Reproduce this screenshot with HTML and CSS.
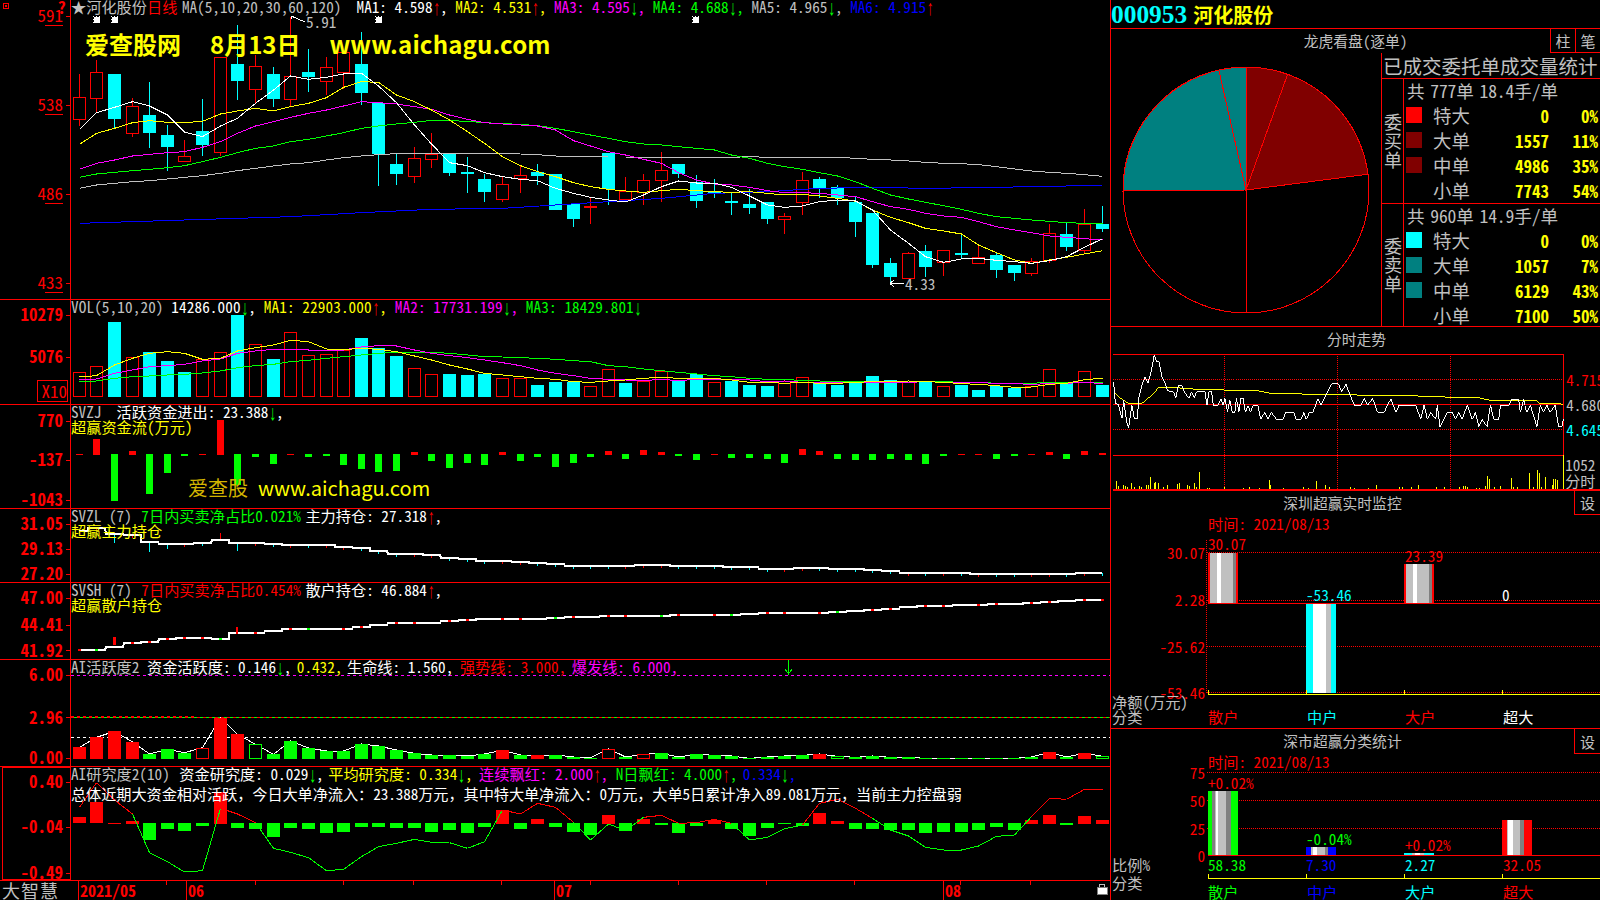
FILE: index.html
```html
<!DOCTYPE html>
<html lang="zh">
<head>
<meta charset="utf-8">
<title>河化股份 日线</title>
<link rel="stylesheet" href="styles.css">
</head>
<body>
<div class="app">
  <div class="left">
    <section class="panel h-main">
      <svg class="axis" viewBox="0 0 70 299">
        <rect class="ln" x="3.5" y="3.5" width="5" height="5"/><rect class="fr" x="5" y="5" width="2" height="2"/>
        <text class="ax" x="63" y="16">591</text><text class="ax b" x="66" y="8">?</text>
        <path class="ln" d="M45 25.5H63M66 16.5H70"/>
        <text class="ax" x="63" y="105">538</text><path class="ln" d="M45 114.5H63M66 105.5H70"/>
        <text class="ax" x="63" y="194">486</text><path class="ln" d="M45 203.5H63M66 194.5H70"/>
        <text class="ax" x="63" y="283">433</text><path class="ln" d="M45 292.5H63M66 283.5H70"/>
      </svg>
      <div class="plot">
        <svg id="main" class="chart" viewBox="71 0 1039 299"></svg>
        <div class="legend">
          <div class="row"><span class="s">★河化股份</span><span class="r">日线</span> <span class="s n3">MA(5,10,20,30,60,120)</span>  <span class="w">MA1: 4.598<i class="ar r">↑</i>,</span> <span class="y">MA2: 4.531<i class="ar r">↑</i>,</span> <span class="m">MA3: 4.595<i class="ar g">↓</i>,</span> <span class="g">MA4: 4.688<i class="ar g">↓</i>,</span> <span class="s">MA5: 4.965<i class="ar g">↓</i>,</span> <span class="bl">MA6: 4.915<i class="ar r">↑</i></span></div>
        </div>
        <div class="wm"><span>爱查股网</span><span>8月13日</span><span>www.aichagu.com</span></div>
      </div>
    </section>

    <section class="panel h-vol">
      <svg class="axis" viewBox="0 300 70 104">
        <text class="ax b" x="63" y="315">10279</text><text class="ax b" x="63" y="357">5076</text>
        <path class="ln" d="M66 315.5H70M66 357.5H70"/>
        <rect class="ln" x="37.5" y="380.5" width="30" height="21"/>
        <text class="ax" x="67" y="392">X10</text>
      </svg>
      <div class="plot">
        <svg id="vol" class="chart" viewBox="71 300 1039 104"></svg>
        <div class="legend ls">
          <div class="row"><span class="s">VOL(5,10,20)</span> <span class="w">14286.000<i class="ar g">↓</i>,</span> <span class="y">MA1: 22903.000<i class="ar r">↑</i>,</span> <span class="m">MA2: 17731.199<i class="ar g">↓</i>,</span> <span class="g">MA3: 18429.801<i class="ar g">↓</i></span></div>
        </div>
      </div>
    </section>

    <section class="panel h-zj">
      <svg class="axis" viewBox="0 405 70 103">
        <text class="ax b" x="63" y="421">770</text><text class="ax b" x="63" y="460">-137</text><text class="ax b" x="63" y="500">-1043</text>
        <path class="ln" d="M66 421.5H70M66 460.5H70M66 500.5H70"/>
      </svg>
      <div class="plot">
        <svg id="zj" class="chart" viewBox="71 405 1039 103"></svg>
        <div class="legend">
          <div class="row"><span class="s">SVZJ</span>  <span class="w">活跃资金进出: 23.388<i class="ar g">↓</i>,</span></div>
          <div class="row y">超赢资金流(万元)</div>
        </div>
        <div class="wm2"><span>爱查股</span><span>www.aichagu.com</span></div>
      </div>
    </section>

    <section class="panel h-zl">
      <svg class="axis" viewBox="0 509 70 73">
        <text class="ax b" x="63" y="524">31.05</text><text class="ax b" x="63" y="549">29.13</text><text class="ax b" x="63" y="574">27.20</text>
        <path class="ln" d="M66 524.5H70M66 549.5H70M66 574.5H70"/>
      </svg>
      <div class="plot">
        <svg id="zl" class="chart" viewBox="71 509 1039 73"></svg>
        <div class="legend">
          <div class="row"><span class="s">SVZL (7)</span> <span class="g p2">7日内买卖净占比0.021%</span> <span class="w n3">主力持仓: 27.318<i class="ar r">↑</i>,</span></div>
          <div class="row y">超赢主力持仓</div>
        </div>
      </div>
    </section>

    <section class="panel h-sh">
      <svg class="axis" viewBox="0 583 70 76">
        <text class="ax b" x="63" y="598">47.00</text><text class="ax b" x="63" y="625">44.41</text><text class="ax b" x="63" y="651">41.92</text>
        <path class="ln" d="M66 598.5H70M66 625.5H70M66 650.5H70"/>
      </svg>
      <div class="plot">
        <svg id="sh" class="chart" viewBox="71 583 1039 76"></svg>
        <div class="legend">
          <div class="row"><span class="s">SVSH (7)</span> <span class="r p2">7日内买卖净占比0.454%</span> <span class="w n3">散户持仓: 46.884<i class="ar r">↑</i>,</span></div>
          <div class="row y">超赢散户持仓</div>
        </div>
      </div>
    </section>

    <section class="panel h-hy">
      <svg class="axis" viewBox="0 660 70 106">
        <text class="ax b" x="63" y="675">6.00</text><text class="ax b" x="63" y="718">2.96</text><text class="ax b" x="63" y="758">0.00</text>
        <path class="ln" d="M66 675.5H70M66 717.5H70M66 758.5H70"/>
      </svg>
      <div class="plot">
        <svg id="hy" class="chart" viewBox="71 660 1039 106"></svg>
        <div class="legend">
          <div class="row"><span class="s">AI活跃度2</span> <span class="w">资金活跃度: 0.146<i class="ar g">↓</i>,</span> <span class="y n2">0.432,</span> <span class="w n3">生命线: 1.560,</span> <span class="r n1">强势线: 3.000,</span> <span class="m n2">爆发线: 6.000,</span></div>
        </div>
      </div>
    </section>

    <section class="panel h-yj">
      <svg class="axis" viewBox="0 767 70 113">
        <rect class="ln" x="2.5" y="767.5" width="68" height="112"/>
        <text class="ax b" x="63" y="782">0.40</text><text class="ax b" x="63" y="827">-0.04</text><text class="ax b" x="63" y="873">-0.49</text>
        <path class="ln" d="M66 782.5H70M66 827.5H70M66 873.5H70"/>
      </svg>
      <div class="plot">
        <svg id="yj" class="chart" viewBox="71 767 1039 113"></svg>
        <div class="legend wide">
          <div class="row"><span class="s">AI研究度2(10)</span> <span class="w p2">资金研究度: 0.029<i class="ar g">↓</i>,</span> <span class="y n3">平均研究度: 0.334<i class="ar g">↓</i>,</span> <span class="m n1">连续飘红: 2.000<i class="ar r">↑</i>,</span> <span class="g">N日飘红: 4.000<i class="ar r">↑</i>,</span> <span class="bl n2">0.334<i class="ar g">↓</i>,</span></div>
          <div class="row w tight">总体近期大资金相对活跃，今日大单净流入：23.388万元，其中特大单净流入：0万元，大单5日累计净入89.081万元，当前主力控盘弱</div>
        </div>
      </div>
    </section>

    <svg class="datebar" viewBox="0 881 1110 19">
      <text class="brand" x="2" y="890">大智慧</text>
      <path class="ln" d="M78.5 881V900M186.5 881V900M554.5 881V900M943.5 881V900M166.5 881V885M255.5 881V885M343.5 881V885M413.5 881V885M501.5 881V885M590.5 881V885M678.5 881V885M766.5 881V885M854.5 881V885M960.5 881V885M1030.5 881V885"/>
      <text class="dt" x="80" y="891">2021/05</text><text class="dt" x="188" y="891">06</text><text class="dt" x="556" y="891">07</text><text class="dt" x="945" y="891">08</text>
      <path class="lock" d="M1099.5 887V884.5H1104.5V887"/><rect class="lockb" x="1097" y="887" width="10" height="7"/>
    </svg>
  </div>

  <aside class="side">
    <header class="quote"><span class="code">000953</span><span class="nm">河化股份</span></header>

    <section class="pane p1">
      <div class="titlebar tb1"><div class="ttl">龙虎看盘(逐单)</div><button class="btn">柱</button><button class="btn">笔</button></div>
      <div class="pie-body">
        <svg class="pie" viewBox="1111 53 270 273">
          <path class="dr" d="M1246 190L1246 67A123 123 0 0 1 1287.6 74.3Z"/>
          <path class="dr" d="M1246 190L1287.6 74.3A123 123 0 0 1 1368 174.2Z"/>
          <path class="tl" d="M1246 190L1123 191A123 123 0 0 1 1218.8 70Z"/>
          <path class="tl" d="M1246 190L1218.8 70A123 123 0 0 1 1246 67Z"/>
          <circle class="ln" cx="1246" cy="190" r="123"/>
          <path class="ln" d="M1246 190V313"/>
        </svg>
        <div class="stats">
          <div class="stats-h">已成交委托单成交量统计</div>
          <div class="group gb">
            <div class="vl">委买单</div>
            <div class="rows">
              <div class="total">共 777单 18.4手/单</div>
              <div class="srow"><i class="sw sr"></i><span>特大</span><b>0</b><b>0%</b></div>
              <div class="srow"><i class="sw sd"></i><span>大单</span><b>1557</b><b>11%</b></div>
              <div class="srow"><i class="sw sd"></i><span>中单</span><b>4986</b><b>35%</b></div>
              <div class="srow"><i class="sw"></i><span>小单</span><b>7743</b><b>54%</b></div>
            </div>
          </div>
          <div class="group">
            <div class="vl">委卖单</div>
            <div class="rows">
              <div class="total">共 960单 14.9手/单</div>
              <div class="srow"><i class="sw sc"></i><span>特大</span><b>0</b><b>0%</b></div>
              <div class="srow"><i class="sw st"></i><span>大单</span><b>1057</b><b>7%</b></div>
              <div class="srow"><i class="sw st"></i><span>中单</span><b>6129</b><b>43%</b></div>
              <div class="srow"><i class="sw"></i><span>小单</span><b>7100</b><b>50%</b></div>
            </div>
          </div>
        </div>
      </div>
    </section>

    <section class="pane p2">
      <div class="titlebar tb2"><div class="ttl">分时走势</div></div>
      <svg id="fs" class="chart" viewBox="1111 354 489 135"></svg>
    </section>

    <section class="pane p3">
      <div class="titlebar tb3"><div class="ttl">深圳超赢实时监控</div><button class="btn">设</button></div>
      <svg id="sz" class="chart" viewBox="1111 515 489 213"></svg>
    </section>

    <section class="pane p4">
      <div class="titlebar tb4"><div class="ttl">深市超赢分类统计</div><button class="btn">设</button></div>
      <svg id="ss" class="chart" viewBox="1111 754 489 146"></svg>
    </section>
  </aside>
</div>
<script src="charts.js"></script>
</body>
</html>
```
FILE: styles.css
```css
* { box-sizing: border-box; }
html, body { margin: 0; padding: 0; background: #000; }
body { font-family: "Noto Sans Mono CJK SC", "Liberation Mono", "Noto Sans CJK SC", monospace; font-size: 15px; color: #c0c0c0; overflow: hidden; }
svg { display: block; shape-rendering: crispEdges; }
i { font-style: normal; }
.app { display: flex; width: 1600px; height: 900px; overflow: hidden; }
.left { width: 1110px; display: flex; flex-direction: column; }
.panel { display: flex; border-bottom: 1px solid #f00; }
.h-main { height: 300px; }
.h-vol { height: 105px; }
.h-zj { height: 104px; }
.h-zl { height: 74px; }
.h-sh { height: 77px; }
.h-hy { height: 107px; }
.h-yj { height: 114px; }
.axis { width: 70px; flex: none; height: 100%; }
.plot { position: relative; flex: 1; border-left: 1px solid #f00; }
.chart { width: 100%; height: 100%; }
.legend { position: absolute; left: 0; top: -1px; font-size: 15.2px; line-height: 14.5px; }
.ls { letter-spacing: 0.12px; }
.wide .row + .row { margin-top: 5.5px; }
.tight { letter-spacing: -0.08px; }
.row { height: 14.5px; white-space: pre; }
.n1 { margin-left: -1px; }
.n2 { margin-left: -2px; }
.n3 { margin-left: -3px; }
.p2 { margin-left: 2px; }
.ar { display: inline-block; width: 7.6px; font-family: "Liberation Mono", monospace; font-size: 14px; line-height: 10px; text-align: center; transform: scaleY(1.55); }
.s { color: #c0c0c0; fill: #c0c0c0; }
.w { color: #fff; fill: #fff; }
.y { color: #ff0; fill: #ff0; }
.m { color: #f0f; fill: #f0f; }
.g { color: #0f0; fill: #0f0; }
.r { color: #f00; fill: #f00; }
.c { color: #0ff; fill: #0ff; }
.bl { color: #00f; fill: #00f; }
.wm { position: absolute; left: 14px; top: 28px; display: flex; gap: 29px; color: #ff0; font: bold 24px/32px "Noto Sans CJK SC", sans-serif; }
.wm span:last-child { letter-spacing: 0.15px; }
.wm2 { position: absolute; left: 117px; top: 68px; display: flex; gap: 10px; color: #ff0; font: 20px/30px "Noto Sans CJK SC", sans-serif; }
.wm2 span:first-child { color: #d2b400; }
.ln { fill: none; stroke: #f00; stroke-width: 1; }
.fr { fill: #f00; }
.ax { font: 17px "Noto Sans Mono CJK SC", "Liberation Mono", monospace; fill: #f00; text-anchor: end; dominant-baseline: central; transform: translateY(-1.5px); }
.ax.b { font-weight: bold; }
.datebar { width: 1110px; height: 19px; }
.brand { font: 18px "Noto Sans CJK SC", sans-serif; letter-spacing: 1px; fill: #c0c0c0; dominant-baseline: central; }
.dt { font: bold 16px "Noto Sans Mono CJK SC", "Liberation Mono", monospace; fill: #f00; dominant-baseline: central; transform: translateY(-1px); }
.lock { fill: none; stroke: #c0c0c0; }
.lockb { fill: #fff; stroke: #808080; }
.side { width: 490px; border-left: 1px solid #f00; display: flex; flex-direction: column; }
.quote { height: 29px; border-bottom: 1px solid #f00; display: flex; align-items: center; gap: 6px; }
.code { color: #0ff; font: bold 25.4px "Liberation Serif", serif; }
.nm { color: #ff0; font: bold 20px "Noto Sans CJK SC", sans-serif; }
.pane { display: flex; flex-direction: column; border-bottom: 1px solid #f00; }
.p1 { height: 298px; }
.p2 { height: 164px; border-bottom-width: 2px; }
.p3 { height: 238px; }
.p4 { height: 171px; border-bottom: 0; }
.titlebar { height: 24px; flex: none; display: flex; }
.tb1 .ttl { padding-left: 50px; }
.tb2 { height: 27px; }
.tb4 { height: 25px; }
.ttl { flex: 1; text-align: center; line-height: 23px; font-size: 14.8px; }
.tb2 .ttl { line-height: 24px; }
.btn { width: 25px; flex: none; background: #000; border: 0; border-left: 1px solid #f00; border-bottom: 1px solid #f00; color: #c0c0c0; padding: 0; font: 15px "Noto Sans CJK SC", sans-serif; }
.tb3 .btn, .tb4 .btn { width: 26px; }
.pie-body { flex: 1; min-height: 0; display: flex; }
.pie { width: 270px; height: 273px; flex: none; }
.stats { flex: 1; min-width: 0; border-left: 1px solid #f00; display: flex; flex-direction: column; }
.stats-h { height: 27px; border-bottom: 1px solid #f00; white-space: nowrap; padding-left: 1px; font: 19.5px/25px "Noto Sans CJK SC", sans-serif; }
.group { display: flex; flex: none; }
.gb { height: 125px; border-bottom: 1px solid #f00; }
.vl { width: 22px; flex: none; border-right: 1px solid #f00; writing-mode: vertical-rl; text-align: center; font: 18px/21px "Noto Sans CJK SC", sans-serif; letter-spacing: 1px; }
.rows { flex: 1; min-width: 0; padding-top: 1px; }
.total { height: 22px; padding-left: 3px; font-size: 17.6px; line-height: 22px; white-space: pre; word-spacing: -3px; letter-spacing: -0.1px; }
.srow { height: 25px; display: grid; grid-template-columns: 16px 1fr 50px 49px; align-items: center; padding: 0 2px; }
.srow span { padding-left: 11px; font: 18.4px "Noto Sans CJK SC", sans-serif; }
.srow b { text-align: right; color: #ff0; font: bold 17px "Noto Sans Mono CJK SC", "Liberation Mono", monospace; }
.sw { width: 16px; height: 16px; display: block; }
.sr { background: #f00; }
.sd { background: #800000; }
.sc { background: #0ff; }
.st { background: #008080; }
.dr { fill: #800000; stroke: #f00; }
.tl { fill: #008080; stroke: #f00; }
.t { font-size: 15.2px; dominant-baseline: central; transform: translateY(-1px); }
.te { text-anchor: end; }
```
FILE: charts.js
```js
const X = i => Math.round(78.6 + i * 17.64);
const rect = (x, y, w, h, f) => `<rect x="${x}" y="${y}" width="${w}" height="${h}" fill="${f}"/>`;
const box = (x, y, w, h, s) => `<rect x="${x + 0.5}" y="${y + 0.5}" width="${w - 1}" height="${h - 1}" fill="#000" stroke="${s}"/>`;
const line = (x1, y1, x2, y2, s, d, o) => `<line x1="${x1}" y1="${y1}" x2="${x2}" y2="${y2}" stroke="${s}"${d ? ` stroke-dasharray="${d}"` : ''}${o ? ` stroke-dashoffset="${o}"` : ''}/>`;
const poly = (pts, s, w) => `<polyline points="${pts.map(p => p.join(',')).join(' ')}" fill="none" stroke="${s}" stroke-width="${w || 1}"/>`;
const txt = (x, y, t, c, end) => `<text class="t ${c}${end ? ' te' : ''}" x="${x}" y="${y}">${t}</text>`;
const series = (a, off) => a.map((v, i) => [X(i) + 0.5, off + v / 3]);
const set = (id, html) => { document.getElementById(id).innerHTML = html; };
const RED = '#f00', CY = '#0ff', GR = '#0f0', WH = '#fff', YE = '#ff0', MA = '#f0f', SI = '#c0c0c0', BL = '#00f';

/* type, body top, body bottom, high, low (zoomed pixels) */
const K = [
['r',290,355,222,378],['r',217,295,180,335],['c',222,356,222,385],['r',319,400,295,410],['c',346,401,247,443],
['c',406,443,376,512],['r',467,482,420,482],['c',394,437,297,467],['r',172,457,172,468],['c',193,245,76,300],
['r',199,268,166,310],['c',223,299,202,320],['r',229,298,50,318],['c',217,231,148,276],['r',202,244,172,286],
['r',157,218,157,268],['c',193,281,97,315],['c',310,462,310,557],['c',493,524,462,555],['r',473,526,442,548],
['r',461,475,400,503],['c',462,518,462,527],['c',517,524,472,578],['c',538,578,522,605],['r',553,598,528,605],
['r',524,534,495,578],['c',516,527,492,555],['c',522,630,522,630],['c',612,656,612,680],['f',618,622,592,672],
['c',459,568,459,614],['r',574,599,532,600],['r',541,577,522,614],['r',511,542,457,605],['c',493,524,493,534],
['c',547,605,526,623],['c',573,581,538,594],['c',603,608,580,644],['c',612,623,568,641],['c',606,656,606,671],
['r',649,659,640,701],['r',541,608,517,644],['c',538,564,532,594],['c',562,594,556,614],['c',606,665,592,710],
['c',640,797,640,803],['c',790,833,775,852],['r',760,836,755,836],['c',754,803,736,832],['r',751,788,751,827],
['c',760,767,704,776],['r',770,788,738,788],['c',766,812,756,833],['c',796,821,796,842],['r',782,818,775,827],
['r',700,782,672,788],['c',702,740,668,752],['r',673,752,628,758],['c',672,686,618,695]];

const MA1 = [388,338,322,305,318,345,396,410,378,355,310,270,228,238,232,222,220,258,308,375,432,488,497,518,530,538,542,565,580,592,600,606,585,560,543,549,549,562,588,615,622,618,605,600,603,630,690,730,770,787,777,775,781,785,790,782,770,742,716];
const MA2 = [433,400,385,368,362,367,368,364,342,333,325,333,320,310,293,262,245,247,285,305,330,360,395,430,470,497,515,530,548,560,568,573,577,572,568,572,575,577,575,580,585,583,588,595,604,630,652,668,685,693,702,735,758,780,790,780,772,762,752];
const MA3 = [508,490,480,468,463,458,455,442,425,400,378,365,352,340,330,318,305,308,312,320,328,345,358,368,372,375,378,390,422,438,455,465,478,490,518,540,552,555,562,572,578,578,580,585,590,605,620,628,640,648,652,665,680,690,698,708,712,716,720];
const MA4 = [532,522,517,512,508,503,497,485,472,458,445,438,425,418,408,398,385,378,372,367,361,362,364,368,371,373,377,385,395,405,415,425,432,435,440,445,450,465,475,490,500,508,518,528,545,565,585,597,607,617,628,640,650,655,660,664,668,670,670];
const MA5 = [565,555,550,545,542,537,532,527,520,512,505,498,492,488,480,473,468,464,461,461,461,461,461,461,461,462,464,468,469,470,471,471,471,471,471,472,472,472,470,472,472,472,472,472,475,478,480,483,487,490,491,494,500,507,513,517,520,524,529];
const MA6 = [[0,670],[6,660],[12,650],[16,638],[20,628],[24,625],[27,615],[30,605],[33,595],[36,580],[39,575],[42,565],[45,562],[48,565],[51,563],[54,560],[56,558],[58,557]];

const star = (x, y) => `<g stroke="#fff">${line(x - 3, y, x + 4, y, WH)}${line(x + .5, y - 3, x + .5, y + 4, WH)}${rect(x - 2, y - 2, 5, 5, WH)}${line(x - 3, y - 3, x + 4, y + 4, WH)}${line(x + 4, y - 3, x - 3, y + 4, WH)}</g>`;
let h = '';
K.forEach((k, i) => {
  const x = X(i), t = k[1] / 3, b = k[2] / 3, hi = k[3] / 3, lo = k[4] / 3;
  const c = k[0] === 'c' ? CY : RED;
  h += line(x + .5, hi, x + .5, lo, c);
  if (k[0] === 'r') h += box(x - 6, Math.round(t), 13, Math.max(3, Math.round(b - t) + 1), RED);
  else h += rect(x - 6, Math.round(t), 13, Math.max(2, Math.round(b - t)), c);
});
h += poly(MA6.map(p => [X(p[0]) + .5, p[1] / 3]), BL, 1);
h += poly(series(MA5, 0), SI);
h += poly(series(MA4, 0), GR);
h += poly(series(MA3, 0), MA);
h += poly(series(MA2, 0), YE);
h += poly(series(MA1, 0), WH);
h += star(96, 19) + star(114, 19) + star(378, 19) + star(695, 19);
h += poly([[291, 16], [305, 22]], WH) + poly([[291, 16], [294, 16]], WH) + poly([[291, 16], [292, 19]], WH);
h += txt(306, 22, '5.91', 's');
h += poly([[890, 283.5], [904, 283.5]], WH) + poly([[890, 283.5], [894, 280]], WH) + poly([[890, 283.5], [894, 287]], WH);
h += txt(905, 284, '4.33', 's');
set('main', h);

/* volume */
const VT = [['r',230],['r',214],['c',82],['r',185],['c',172],['c',198],['c',232],['r',192],['r',170],['c',60],['r',148],['c',192],['r',112],['r',181],['r',178],['r',165],['c',130],['c',160],['c',183],['r',220],['r',238],['c',237],['c',240],['c',236],['r',250],['r',250],['c',270],['c',262],['c',260],['r',274],['r',223],['c',264],['r',258],['r',228],['c',258],['c',238],['r',262],['c',258],['c',270],['c',273],['r',258],['r',247],['c',265],['c',270],['c',264],['c',243],['c',256],['r',262],['c',258],['r',274],['c',270],['c',285],['c',272],['c',278],['r',272],['r',223],['c',265],['r',229],['c',270]];
const VM1 = [246,242,210,190,175,170,175,193,190,168,158,150,136,140,162,164,160,163,170,183,195,210,222,235,240,245,250,253,260,262,258,255,250,247,250,250,250,255,262,262,265,262,265,265,262,260,260,258,260,262,266,268,272,277,276,268,265,254,250];
const VM2 = [254,252,235,225,215,212,208,198,192,175,168,163,163,165,165,165,156,152,153,165,175,182,188,195,203,212,225,235,242,250,253,255,256,254,256,254,253,254,255,260,258,262,263,262,262,262,262,262,260,262,263,263,265,266,268,266,265,262,266];
const VM3 = [261,258,250,245,243,240,238,234,228,218,212,208,200,196,190,185,180,175,172,172,172,175,180,185,186,188,190,193,197,200,212,215,222,227,232,237,242,245,250,253,254,256,258,259,260,259,258,258,258,260,262,262,265,265,265,262,262,262,262];
h = '';
VT.forEach((v, i) => {
  const x = X(i), t = Math.round(295 + v[1] / 3), hh = 397 - t;
  h += v[0] === 'c' ? rect(x - 6, t, 13, hh, CY) : box(x - 6, t, 13, hh, RED);
});
h += poly(series(VM3, 295), GR) + poly(series(VM2, 295), MA) + poly(series(VM1, 295), YE);
set('vol', h);

/* bars around a baseline: colour, top, bottom */
const ZJ = [['r',477,479],['r',432,480],['g',478,618],['r',468,480],['g',478,597],['g',478,534],['g',478,483],['r',477,479],['r',376,480],['g',478,570],['g',478,487],['g',478,507],['r',477,479],['g',478,486],['g',478,484],['g',478,510],['g',478,522],['g',478,531],['g',478,528],['r',472,480],['g',478,498],['g',478,519],['g',478,504],['g',478,510],['r',472,480],['g',478,498],['g',478,486],['g',478,516],['g',478,504],['g',478,486],['r',468,480],['g',478,492],['r',466,480],['r',471,480],['g',478,483],['g',478,495],['r',477,479],['g',478,489],['g',478,489],['g',478,492],['g',478,504],['r',462,480],['r',468,480],['g',478,492],['g',478,495],['g',478,495],['g',478,492],['g',478,495],['g',478,507],['g',478,483],['r',477,479],['r',477,479],['g',478,492],['g',478,483],['r',477,479],['r',471,480],['g',478,492],['r',468,480],['r',474,480]];
h = '';
ZJ.forEach((b, i) => {
  const y = Math.round(295 + b[1] / 3), e = Math.max(y + 1, Math.round(295 + b[2] / 3));
  h += rect(X(i) - 3, y, 7, e - y, b[0] === 'r' ? RED : GR);
});
set('zj', h);

/* holdings */
const stepLine = (a, off) => {
  const p = [];
  a.forEach((v, i) => {
    const y = Math.round(off + v / 3);
    p.push([i ? X(i) - 8 : X(0), y], [i === a.length - 1 ? X(i) : X(i) + 9, y]);
  });
  return poly(p, WH, 2);
};
const ZL = [708,700,718,720,740,746,746,745,735,743,744,748,749,749,750,755,760,768,776,778,779,790,793,797,797,800,803,807,813,813,813,813,809,809,812,812,812,815,815,821,821,818,818,821,821,824,828,833,833,833,833,836,836,836,836,836,836,833,833];
h = '';
ZL.forEach((v, i) => {
  const y = Math.round(295 + v / 3), x = X(i) + .5, red = K[i][0] === 'r';
  const big = { 2: 14, 4: 16, 5: 6, 9: 12 };
  if (i === 8) h += line(x, y - 7, x, y, RED);
  else h += line(x, y, x, y + (big[i] ? big[i] / 2 + 2 : 3), red ? RED : CY);
});
h += stepLine(ZL, 295);
set('zl', h);

const SH = [180,180,170,160,155,147,145,145,148,128,128,122,118,117,117,117,112,106,98,98,98,94,91,88,88,88,88,85,82,80,78,78,78,78,76,74,74,74,72,69,68,68,68,66,63,59,57,51,48,48,46,44,42,41,39,36,33,30,30];
h = stepLine(SH, 590);
SH.forEach((v, i) => {
  const y = Math.round(590 + v / 3), x = X(i);
  const green = [1, 8, 13, 26, 27, 32, 33, 37, 43].includes(i);
  if (i === 2) h += rect(x - 1, 637, 3, 8, RED);
  else if (i === 9) h += rect(x - 1, 627, 2, 7, RED);
  else if (i % 3 !== 2 || i < 10) h += rect(x - 1, y - 1, 3, 2, green ? GR : RED);
});
set('sh', h);

/* activity */
const HY = [['r',472],['r',442],['r',424],['r',456],['g',492],['g',478],['g',488],['R',473],['r',383],['r',433],['G',463],['g',493],['g',453],['g',474],['g',483],['g',483],['g',462],['g',468],['g',480],['g',490],['g',495],['g',495],['g',498],['g',492],['r',481],['g',495],['r',495],['g',495],['g',501],['g',503],['R',476],['g',501],['R',493],['g',490],['g',501],['g',493],['g',496],['g',498],['g',505],['g',501],['g',498],['g',496],['r',492],['G',499],['g',502],['g',498],['g',502],['g',502],['g',505],['g',505],['g',505],['g',505],['g',505],['g',505],['g',501],['r',487],['g',501],['r',490],['G',499]];
h = line(71, 675.5, 1110, 675.5, MA, '3 3');
h += line(71, 717.5, 1110, 717.5, RED, '3 3') + line(71, 717.5, 1110, 717.5, GR, '3 3', 3);
h += line(71, 716.5, 196, 716.5, RED, '3 3');
h += line(71, 737.5, 1110, 737.5, WH, '3 3');
h += poly(HY.map((b, i) => [X(i) + .5, 590 + b[1] / 3]), WH);
HY.forEach((b, i) => {
  const t = Math.round(590 + b[1] / 3), hh = 759 - t, x = X(i) - 6;
  if (b[0] === 'r') h += rect(x, t, 13, hh, RED);
  else if (b[0] === 'g') h += rect(x, t, 13, hh, GR);
  else if (b[0] === 'R') h += box(x, t, 13, hh, RED);
  else h += box(x, t, 13, hh, GR);
});
h += line(788.5, 660, 788.5, 674, GR) + `<path d="M785 669L788.5 674L792 669" fill="none" stroke="${GR}"/>`;
set('hy', h);

/* research */
const YJ = [['r',681,700],['r',636,700],['r',700,701],['r',693,701],['g',699,749],['g',699,717],['g',699,722],['g',699,708],['r',605,701],['g',699,713],['g',699,717],['g',699,740],['g',699,713],['g',699,717],['g',699,728],['g',699,725],['g',699,711],['g',699,712],['g',699,713],['g',699,713],['g',699,725],['g',699,719],['g',699,728],['g',699,711],['r',660,701],['g',699,716],['r',687,701],['g',699,711],['g',699,725],['g',699,735],['r',675,701],['g',699,722],['r',687,701],['g',699,705],['g',699,728],['g',699,708],['r',690,701],['g',699,717],['g',699,737],['g',699,714],['g',700,702],['g',699,709],['r',670,701],['r',693,701],['g',699,717],['g',699,717],['g',699,720],['g',699,720],['g',699,728],['g',699,725],['g',699,725],['g',699,720],['g',699,711],['g',699,720],['r',690,701],['r',675,701],['g',699,705],['r',678,701],['r',690,701]];
const YL = [652,578,630,672,788,815,846,842,655,672,698,775,787,803,842,838,800,770,760,748,757,758,775,755,660,672,640,652,697,750,702,722,682,676,700,698,688,700,750,742,716,705,640,628,655,685,720,738,772,780,780,768,739,735,680,625,628,598,598];
h = '';
YJ.forEach((b, i) => {
  const t = Math.round(590 + b[1] / 3), e = Math.max(t + 1, Math.round(590 + b[2] / 3));
  h += rect(X(i) - 6, t, 13, e - t, b[0] === 'r' ? RED : GR);
});
for (let i = 0; i < YL.length - 1; i++) {
  const c = (YL[i] + YL[i + 1]) / 2 < 700 ? RED : GR;
  h += line(X(i) + .5, 590 + YL[i] / 3, X(i + 1) + .5, 590 + YL[i + 1] / 3, c);
}
set('yj', h);

/* intraday */
const WL = [[35,172],[40,235],[50,240],[60,280],[65,225],[75,295],[80,308],[90,240],[97,280],[107,280],[110,220],[122,175],[130,155],[138,175],[148,140],[157,90],[165,110],[172,110],[180,155],[190,175],[197,197],[215,200],[222,220],[230,180],[240,180],[250,205],[262,218],[270,200],[278,218],[285,200],[310,200],[316,240],[322,200],[330,200],[335,240],[350,240],[358,222],[365,240],[370,220],[378,260],[385,225],[392,262],[400,262],[405,220],[412,262],[418,220],[425,220],[432,262],[440,242],[447,262],[455,242],[470,242],[478,283],[490,262],[500,283],[510,262],[525,283],[545,283],[553,262],[578,262],[585,283],[600,283],[608,262],[615,283],[625,262],[635,262],[650,222],[660,240],[670,220],[680,200],[692,176],[712,176],[722,200],[735,176],[745,205],[760,240],[780,240],[790,220],[800,240],[815,220],[830,262],[850,262],[860,240],[870,222],[885,262],[895,240],[945,240],[960,283],[970,240],[980,283],[990,262],[1005,283],[1010,240],[1018,305],[1030,283],[1040,262],[1055,262],[1065,283],[1075,262],[1085,283],[1100,240],[1115,283],[1125,262],[1135,305],[1145,283],[1160,305],[1170,240],[1180,283],[1195,283],[1200,240],[1225,240],[1235,222],[1255,222],[1260,262],[1270,222],[1280,262],[1290,240],[1310,305],[1320,240],[1330,262],[1340,240],[1350,262],[1365,240],[1375,305],[1385,305],[1390,283]];
const YL2 = [[35,200],[50,215],[80,235],[120,235],[150,210],[170,188],[200,186],[280,192],[365,193],[370,196],[470,197],[510,205],[600,205],[605,208],[765,208],[770,211],[950,211],[955,214],[1030,215],[1035,217],[1130,217],[1170,226],[1310,227],[1315,235],[1370,235],[1390,238]];
const MV = [[42,468],[48,485],[62,482],[68,484],[75,486],[88,475],[95,488],[112,484],[118,488],[132,482],[138,480],[145,457],[155,475],[160,472],[168,475],[183,488],[196,480],[225,478],[232,476],[255,482],[260,484],[275,474],[282,488],[290,441],[316,490],[322,490],[367,488],[425,490],[445,488],[475,490],[503,465],[508,480],[545,490],[605,488],[622,490],[646,470],[672,482],[685,488],[748,488],[760,490],[800,490],[826,480],[895,488],[902,486],[930,486],[952,480],[1005,488],[1030,488],[1075,486],[1085,484],[1092,484],[1098,486],[1125,490],[1137,490],[1155,484],[1162,453],[1168,462],[1183,488],[1200,484],[1232,460],[1240,488],[1252,486],[1286,445],[1298,486],[1310,436],[1316,445],[1322,486],[1336,458],[1355,480],[1360,462],[1366,462],[1372,465]];
const FX = v => 1100 + v / 3, FY = v => 325 + v / 3;
h = '';
h += line(1111, 354.5, 1563.5, 354.5, RED) + line(1563.5, 354.5, 1563.5, 455, RED);
h += line(1111, 379.5, 1563, 379.5, RED, '1 1') + line(1111, 429.5, 1563, 429.5, RED, '1 1');
[1222.5, 1336.5, 1449.5].forEach(x => { h += line(x, 354, x, 489, RED, '1 1'); });
h += line(1111, 404.5, 1563.5, 404.5, RED) + line(1111, 455.5, 1563.5, 455.5, RED);
h += line(1563.5, 455, 1563.5, 489, YE);
MV.forEach(m => { const x = Math.round(FX(m[0])) + .5; h += line(x, FY(m[1]), x, 489, YE); });
h += poly(YL2.map(p => [FX(p[0]), FY(p[1])]), YE);
h += poly(WL.map(p => [FX(p[0]), FY(p[1])]), WH);
h += txt(1566, 380, '4.715', 'r') + txt(1566, 405, '4.680', 's') + txt(1566, 430, '4.645', 'c');
h += txt(1565, 465, '1052', 's') + txt(1565, 481, '分时', 's');
set('fs', h);

/* striped bars */
const stripe = (x, y, hh, parts) => {
  let s = '', cx = x;
  parts.forEach(p => { s += rect(cx, y, p[0], hh, p[1]); cx += p[0]; });
  return s;
};
const C0 = '#c0c0c0', G8 = '#808080';
h = txt(1208, 524, '时间: 2021/08/13', 'r');
[[553, '30.07'], [600, '2.28'], [647, '-25.62'], [693, '-53.46']].forEach(a => { h += txt(1205, a[0], a[1], 'r', 1); });
h += line(1206.5, 540, 1206.5, 694, RED, '1 1');
[552.5, 600.5, 646.5, 692.5].forEach(y => { h += line(1207, y, 1600, y, RED, '1 1'); });
h += line(1208, 603.5, 1600, 603.5, RED);
const mon = e => [[2, e], [7, C0], [4, WH], [12, C0], [3, G8], [2, e]];
h += stripe(1208, 553, 50, mon(RED));
h += stripe(1404, 564, 39, mon(RED));
h += stripe(1306, 604, 89, [[7, CY], [13, WH], [5, C0], [5, CY]]);
h += txt(1208, 544, '30.07', 'r') + txt(1405, 556, '23.39', 'r') + txt(1306, 595, '-53.46', 'c') + txt(1502, 595, '0', 'w');
h += line(1208, 694.5, 1600, 694.5, YE);
[1208.5, 1306.5, 1404.5, 1502.5].forEach(x => { h += line(x, 690, x, 694, YE); });
h += txt(1208, 717, '散户', 'r') + txt(1307, 717, '中户', 'c') + txt(1405, 717, '大户', 'r') + txt(1503, 717, '超大', 'w');
h += txt(1112, 702, '净额(万元)', 's') + txt(1112, 717, '分类', 's');
set('sz', h);

h = txt(1208, 762, '时间: 2021/08/13', 'r');
[[773, '75'], [801, '50'], [829, '25'], [856, '0']].forEach(a => { h += txt(1205, a[0], a[1], 'r', 1); });
[772.5, 800.5, 828.5].forEach(y => { h += line(1207, y, 1600, y, RED, '1 1'); });
h += stripe(1208, 791, 64, [[4, GR], [3, G8], [1, C0], [2, WH], [8, C0], [5, G8], [7, GR]]);
h += stripe(1306, 847, 8, [[5, BL], [2, C0], [4, WH], [8, C0], [3, G8], [8, BL]]);
h += stripe(1404, 853, 2, [[8, CY], [3, C0], [5, WH], [4, C0], [10, CY]]);
h += stripe(1502, 820, 35, [[5, RED], [1, C0], [5, WH], [7, C0], [4, G8], [8, RED]]);
h += line(1208, 855.5, 1600, 855.5, RED);
h += txt(1208, 783, '+0.02%', 'r') + txt(1306, 839, '-0.04%', 'g') + txt(1405, 845, '+0.02%', 'r');
h += txt(1208, 865, '58.38', 'g') + txt(1306, 865, '7.30', 'bl') + txt(1405, 865, '2.27', 'c') + txt(1503, 865, '32.05', 'r');
h += line(1208, 878.5, 1600, 878.5, YE);
[1208.5, 1306.5, 1404.5, 1502.5].forEach(x => { h += line(x, 874, x, 878, YE); });
h += txt(1208, 892, '散户', 'g') + txt(1307, 892, '中户', 'bl') + txt(1405, 892, '大户', 'c') + txt(1503, 892, '超大', 'r');
h += txt(1112, 865, '比例%', 's') + txt(1112, 883, '分类', 's');
set('ss', h);
```
